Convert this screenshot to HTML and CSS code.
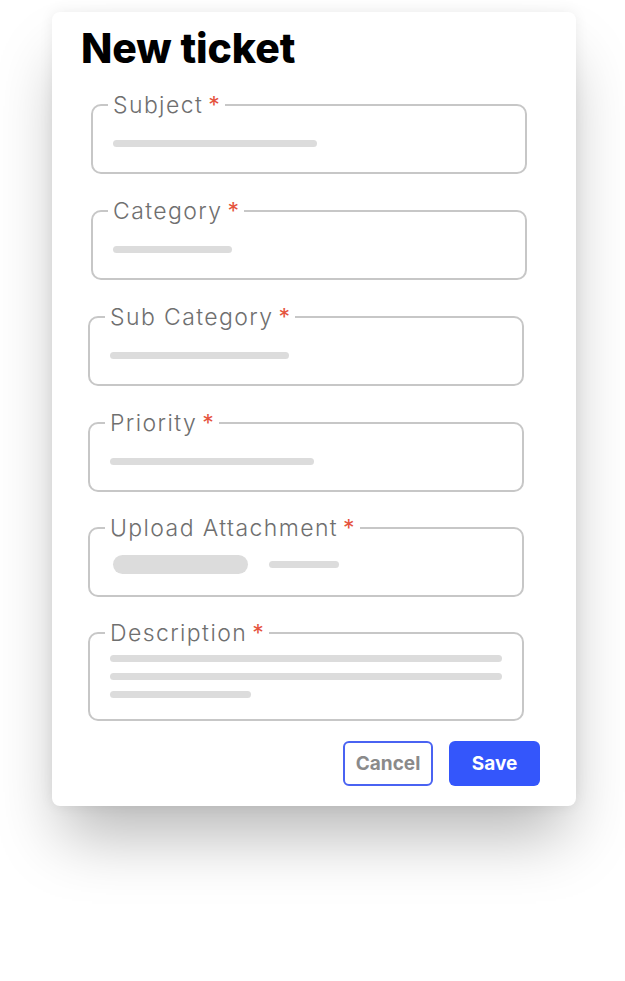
FILE: index.html
```html
<!DOCTYPE html>
<html lang="en">
<head>
    <meta charset="UTF-8">
    <meta name="viewport" content="width=device-width, initial-scale=1.0">
    <title>New ticket</title>
    <link rel="stylesheet" href="styles.css">
</head>
<body>
    <div class="ticket-card">
        <h1 class="ticket-title">New ticket</h1>

        <fieldset class="field shifted">
            <legend>Subject<span class="req">*</span></legend>
            <div class="bar" style="width: 204px;"></div>
        </fieldset>

        <fieldset class="field shifted">
            <legend>Category<span class="req">*</span></legend>
            <div class="bar" style="width: 119px;"></div>
        </fieldset>

        <fieldset class="field">
            <legend>Sub Category<span class="req">*</span></legend>
            <div class="bar" style="width: 179px;"></div>
        </fieldset>

        <fieldset class="field priority-field">
            <legend>Priority<span class="req">*</span></legend>
            <div class="bar" style="width: 204px;"></div>
        </fieldset>

        <fieldset class="field upload-field">
            <legend>Upload Attachment<span class="req">*</span></legend>
            <div class="upload-row">
                <div class="file-pill"></div>
                <div class="bar" style="width: 70px;"></div>
            </div>
        </fieldset>

        <fieldset class="field desc-field">
            <legend>Description<span class="req">*</span></legend>
            <div class="bar" style="width: 392px;"></div>
            <div class="bar" style="width: 392px;"></div>
            <div class="bar" style="width: 141px;"></div>
        </fieldset>

        <div class="actions">
            <button class="btn btn-cancel">Cancel</button>
            <button class="btn btn-save">Save</button>
        </div>
    </div>
</body>
</html>
```

FILE: styles.css
```css
body {
    margin: 0;
    padding: 0;
    min-height: 100vh;
    background-color: #ffffff;
    font-family: Inter, "Noto Sans", sans-serif;
}
.ticket-card {
    width: 524px;
    box-sizing: border-box;
    margin: 12px 0 0 52px;
    padding: 14px 52px 20px 36px;
    background-color: #fff;
    border-radius: 8px;
    box-shadow: 0 40px 60px -10px rgba(0, 0, 0, 0.28), 0 0 14px rgba(0, 0, 0, 0.07);
}
.ticket-title {
    margin: 0 0 23px -7px;
    font-size: 41px;
    line-height: 44px;
    font-weight: 800;
    color: #000;
    letter-spacing: -0.1px;
}
.field {
    margin: 0 0 25px 0;
    padding: 23px 20px 25px 20px;
    border: 2px solid #c7c7c7;
    border-radius: 10px;
    min-width: 0;
}
.field.shifted {
    margin-left: 3px;
    margin-right: -3px;
}
.field legend {
    margin-left: -5px;
    padding: 0 5px;
    font-size: 23px;
    line-height: 24px;
    font-weight: 300;
    color: #6f6f6f;
    letter-spacing: 1.4px;
}
.req {
    margin-left: 5px;
    color: #e5533d;
    font-weight: 400;
    letter-spacing: 0;
}
.bar {
    height: 7px;
    border-radius: 4px;
    background-color: #dcdcdc;
}
.priority-field {
    margin-bottom: 24px;
}
.upload-field {
    margin-bottom: 24px;
    padding-top: 15px;
    padding-bottom: 21px;
}
.upload-row {
    display: flex;
    align-items: center;
    gap: 21px;
    padding-left: 3px;
}
.file-pill {
    width: 135px;
    height: 19px;
    border-radius: 10px;
    background-color: #dcdcdc;
}
.desc-field {
    margin-bottom: 20px;
    padding-top: 10px;
    padding-bottom: 21px;
}
.desc-field .bar + .bar {
    margin-top: 11px;
}
.actions {
    display: flex;
    justify-content: flex-end;
    gap: 16px;
    margin-right: -16px;
}
.btn {
    height: 45px;
    border-radius: 6px;
    font-family: Inter, "Liberation Sans", sans-serif;
    font-size: 19px;
    font-weight: 700;
    cursor: pointer;
}
.btn-cancel {
    width: 90px;
    background-color: #fff;
    border: 2px solid #4a63f2;
    color: #8a8a8a;
}
.btn-save {
    width: 91px;
    background-color: #3456fb;
    border: none;
    color: #fff;
}
```
